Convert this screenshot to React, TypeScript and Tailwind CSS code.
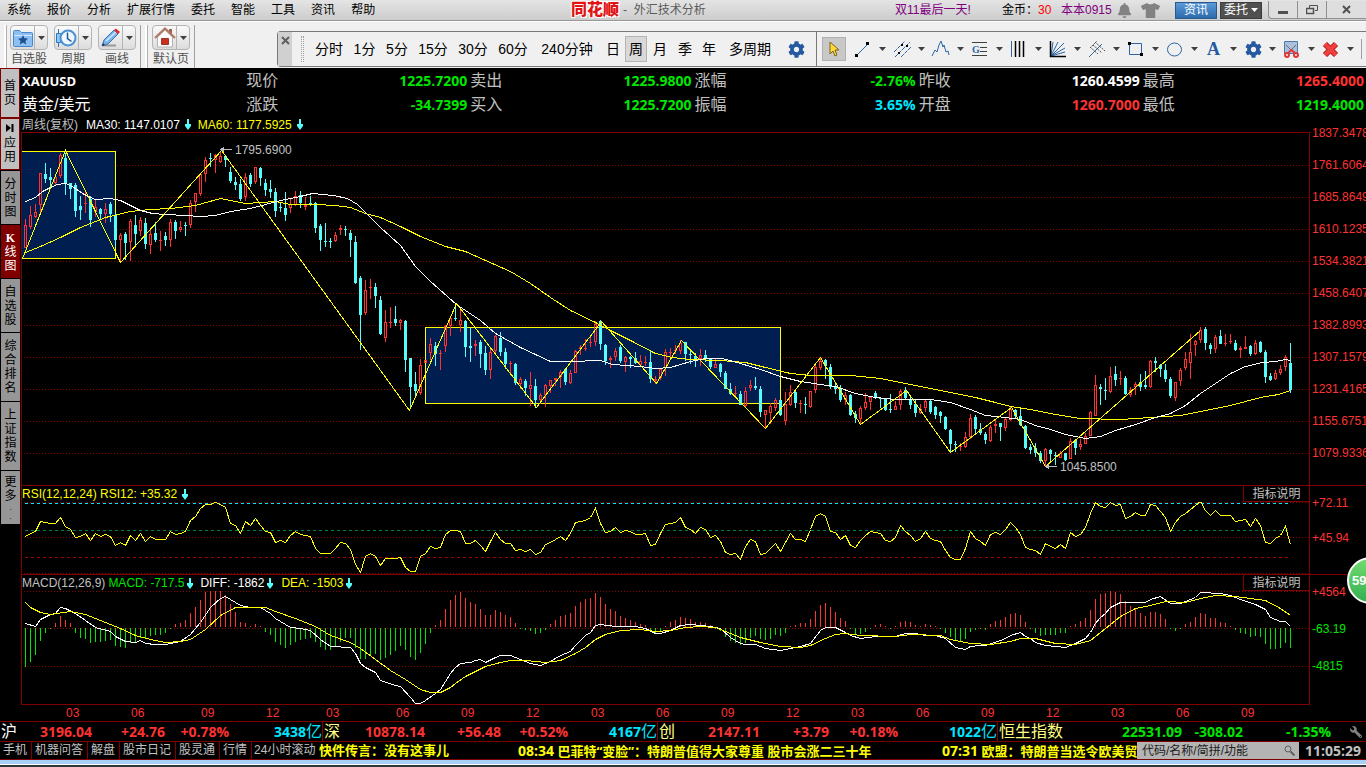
import type {ReactNode} from "react";
import {FaTshirt, FaBell, FaWrench, FaCog} from "react-icons/fa";

// [up, body top, body bottom, high, low], one candle per week
const candles = [
  [1,225,248,219,248],[1,215,227,206,229],[1,212,217,204,218],[1,173,205,173,212],[0,174,179,163,183],
  [0,177,180,168,188],[1,177,183,174,185],[1,155,176,153,178],[0,158,183,153,195],[0,183,189,183,199],
  [0,185,211,183,217],[0,206,210,196,220],[1,203,204,192,213],[0,199,220,196,227],[1,207,212,199,217],
  [0,209,214,208,219],[1,209,214,203,223],[0,204,214,202,222],[0,215,240,213,247],[1,235,240,233,262],
  [0,234,243,232,260],[1,221,242,219,261],[0,225,234,215,247],[1,220,231,217,236],[0,223,244,218,249],
  [1,234,245,229,254],[0,233,240,222,242],[1,240,241,231,251],[0,236,240,232,246],[1,222,240,219,247],
  [0,222,231,220,239],[1,227,230,221,232],[0,225,226,222,236],[1,203,225,200,228],[1,193,202,193,212],
  [1,174,194,173,196],[1,160,174,157,182],[0,158,159,153,167],[1,155,160,154,173],[1,156,162,151,163],
  [0,156,160,155,167],[0,172,181,167,183],[0,182,185,177,190],[0,184,199,179,201],[1,177,197,173,201],
  [0,175,184,173,187],[1,167,182,167,184],[0,168,178,167,186],[0,183,190,179,196],[0,189,192,180,198],
  [0,192,211,188,217],[0,207,208,203,212],[0,208,215,192,221],[1,204,208,198,213],[1,196,205,191,206],
  [0,195,203,191,208],[1,205,207,197,210],[0,203,205,196,206],[0,203,228,202,233],[0,226,240,224,251],
  [0,241,242,223,247],[0,241,242,238,248],[1,235,241,232,242],[1,228,230,225,235],[0,229,230,226,236],
  [0,233,240,230,257],[0,242,283,236,284],[0,278,315,276,350],[1,290,313,280,315],[1,287,288,279,299],
  [0,287,296,283,308],[0,300,334,296,335],[1,322,338,310,342],[1,322,323,307,328],[0,319,323,306,326],
  [1,320,323,319,330],[0,321,360,320,372],[0,358,387,358,409],[0,384,391,372,396],[1,365,393,359,395],
  [1,360,363,360,363],[1,344,353,338,360],[0,346,354,342,366],[1,353,354,350,370],[1,326,346,325,352],
  [1,318,326,316,336],[0,318,319,303,321],[1,320,325,310,332],[0,321,347,320,357],[0,346,348,328,362],
  [1,344,346,340,356],[0,342,354,340,368],[0,353,370,346,375],[1,352,370,349,379],[1,336,351,335,354],
  [0,338,352,332,356],[0,352,364,348,369],[1,363,364,361,374],[0,364,383,363,385],[1,379,384,377,389],
  [0,381,388,379,396],[1,385,389,372,406],[0,386,400,379,408],[1,395,400,393,404],[1,385,395,384,407],
  [1,380,386,380,393],[1,378,380,378,386],[1,372,377,370,388],[0,369,382,368,385],[1,373,383,370,384],
  [1,351,373,350,373],[1,347,349,345,355],[1,348,349,339,351],[1,342,343,335,347],[1,324,342,321,346],
  [0,321,344,320,350],[0,345,361,344,365],[1,358,360,356,368],[1,351,357,348,361],[0,347,361,345,363],
  [1,357,362,356,372],[0,357,359,356,368],[0,358,363,352,364],[1,361,365,355,367],[1,362,363,356,366],
  [0,362,379,350,383],[1,379,381,376,384],[1,369,378,368,380],[1,352,368,349,376],[1,352,353,348,357],
  [1,350,351,345,354],[1,343,351,340,354],[0,342,354,342,361],[0,354,355,351,364],[0,356,361,353,367],
  [1,355,359,349,366],[0,355,358,350,362],[0,358,367,358,369],[1,364,368,359,368],[0,364,372,363,377],
  [0,373,389,371,389],[0,389,394,383,395],[1,393,394,386,397],[0,394,405,391,405],[1,391,406,387,407],
  [1,385,388,380,391],[0,386,388,377,390],[0,389,412,386,417],[1,410,415,410,428],[1,406,413,403,424],
  [1,400,408,398,411],[0,400,415,400,416],[1,404,421,392,425],[1,392,405,385,406],[0,392,403,391,408],
  [1,403,404,400,413],[0,404,405,397,414],[1,391,407,391,408],[1,367,390,365,393],[1,361,368,358,370],
  [0,360,366,359,379],[0,367,387,364,389],[0,387,389,383,394],[0,388,400,385,402],[1,395,400,392,405],
  [0,395,415,394,416],[0,414,418,411,423],[1,408,419,406,424],[1,402,408,393,410],[1,397,402,397,410],
  [0,393,397,391,399],[0,398,399,397,408],[0,398,410,398,411],[0,409,410,394,413],[1,406,410,401,410],
  [1,391,405,389,410],[0,390,398,387,399],[0,399,405,396,409],[0,404,413,399,417],[1,409,413,404,414],
  [1,401,408,400,412],[0,401,412,400,414],[0,407,415,406,419],[0,412,416,411,423],[0,417,429,416,430],
  [0,430,444,429,452],[0,444,445,441,452],[1,446,447,443,451],[1,437,447,432,448],[1,418,437,414,439],
  [0,417,429,415,435],[0,429,433,423,435],[0,434,440,432,444],[1,427,441,425,442],[1,424,426,419,433],
  [0,423,427,423,441],[1,419,428,417,431],[1,409,420,406,421],[0,410,416,409,418],[0,416,425,407,426],
  [0,426,448,425,449],[0,447,450,444,454],[0,448,453,443,457],[0,453,461,451,463],[1,449,461,448,466],
  [0,450,454,449,461],[0,455,456,452,465],[1,453,458,451,458],[0,453,460,453,461],[1,441,459,438,459],
  [0,440,448,439,455],[1,444,447,439,450],[1,436,444,433,444],[1,412,436,411,436],[1,385,416,375,416],
  [0,387,389,384,405],[0,390,391,378,400],[1,376,392,367,393],[0,374,380,366,386],[1,378,379,371,385],
  [0,378,394,376,395],[1,390,395,387,397],[1,384,387,382,395],[0,382,387,374,391],[0,385,387,371,389],
  [1,361,387,360,388],[0,361,363,357,372],[0,365,369,364,377],[0,370,379,364,382],[0,379,396,377,398],
  [1,382,398,382,401],[1,370,381,368,386],[1,359,368,352,370],[1,352,363,334,379],[1,341,345,340,356],
  [1,330,340,327,343],[0,329,343,327,350],[0,345,349,343,354],[1,337,349,335,353],[0,336,344,330,344],
  [1,343,344,334,346],[1,341,342,334,344],[0,343,350,340,351],[1,348,350,346,358],[1,347,349,336,349],
  [0,346,354,345,356],[1,343,354,340,355],[0,342,352,341,353],[0,352,377,350,383],[0,376,380,373,381],
  [1,373,379,370,380],[1,369,373,365,375],[1,357,367,355,371],[0,363,390,343,393],
];

const ma30 = "25,201 35,197 42,191 50,187 57,184 65,183 72,186 82,193 90,197 95,199 110,198 120,200 130,205 140,210 152,213 165,214 185,215 200,216 215,215 230,211 250,208 265,204 280,200 300,196 312,193 333,195 347,198 357,204 367,214 380,227 400,245 415,266 430,281 456,304 480,320 495,333 520,347 550,361 570,361 600,360 612,364 640,366 655,368 670,367 690,361 705,358 722,358 740,363 760,369 780,376 800,381 820,384 835,386 855,393 875,397 895,399 930,399 950,402 970,409 985,415 1005,417 1020,419 1035,425 1050,429 1065,434 1085,438 1100,436 1115,430 1135,424 1155,417 1170,413 1185,405 1200,393 1215,383 1230,373 1245,366 1262,362 1275,361 1285,359 1290,360";
const ma60 = "25,252 40,246 60,237 80,227 105,217 130,211 150,209 170,208 195,205 220,198 245,203 275,201 290,204 315,204 335,205 350,207 365,213 380,217 400,226 420,236 445,246 465,251 485,260 510,271 530,283 550,297 570,310 595,322 610,330 630,340 655,353 672,357 690,359 720,360 745,362 765,367 790,373 810,375 850,375 880,378 900,382 930,388 955,393 975,397 995,402 1010,406 1030,409 1055,414 1080,418 1120,419 1150,417 1180,415 1205,410 1230,405 1260,397 1278,394 1290,390";
const zigzag = "22,258 65,150 120,262 221,150 409,410 456,303 536,407 601,321 656,383 681,340 765,428 820,357 860,424 906,390 950,452 1011,407 1045,466 1200,330";

const rsi = [
  167,160,154,124,127,130,128,110,138,148,170,168,160,179,160,169,162,169,196,186,196,164,180,160,184,169,178,178,178,152,162,158,
  153,120,108,84,73,72,67,72,82,128,136,160,124,136,115,135,153,155,185,180,187,164,154,163,166,168,205,220,220,220,205,187,
  190,206,253,276,228,220,228,256,235,235,235,230,260,274,274,229,220,197,205,200,162,151,151,154,190,190,181,196,213,184,157,178,
  190,190,211,206,214,208,223,215,192,185,178,167,181,160,125,123,121,112,85,130,157,152,142,157,151,153,163,161,160,196,193,160,
  133,130,127,112,142,146,160,142,148,172,166,184,215,223,220,238,197,178,184,223,219,205,190,214,187,160,178,178,184,148,109,100,
  109,154,157,178,166,196,202,181,166,154,157,160,181,184,172,136,152,166,184,173,154,175,180,184,211,232,236,236,205,154,175,184,
  196,163,157,163,148,127,142,162,202,206,211,222,190,198,205,193,205,157,169,163,142,100,67,79,82,67,75,73,115,109,97,106,
  106,72,76,93,112,154,127,109,98,87,76,64,91,106,91,106,105,104,124,121,118,139,115,136,187,190,175,166,139,193,
];

const macd = [
  -117,-102,-81,-39,-15,-3,11,32,22,11,-15,-30,-33,-45,-43,-43,-40,-36,-54,-57,-60,-45,-42,-30,-30,-24,-21,-21,-15,-2,8,13,
  20,41,59,80,104,110,110,110,97,68,44,14,11,2,8,3,-12,-21,-42,-51,-60,-51,-42,-36,-33,-30,-42,-57,-66,-66,-54,-42,
  -30,-30,-60,-93,-93,-85,-78,-96,-90,-81,-69,-54,-66,-87,-96,-75,-48,-15,5,20,53,80,95,104,86,74,68,53,35,35,50,44,
  35,29,11,-2,-6,-10,-18,-15,-6,8,20,32,35,41,62,74,83,86,101,89,68,53,47,32,26,20,14,9,5,-9,-15,-12,
  3,14,20,29,26,23,14,14,11,5,-3,-9,-27,-39,-45,-51,-45,-30,-24,-33,-36,-33,-21,-24,-15,2,5,11,11,23,47,65,
  71,59,44,26,17,-3,-18,-18,-12,-3,5,8,3,-3,2,14,17,14,5,3,8,5,2,-3,-15,-27,-39,-43,-33,-12,-7,-4,
  -6,8,17,20,29,38,41,35,14,-3,-15,-24,-21,-21,-21,-15,-15,2,8,17,26,50,83,98,101,110,104,98,77,62,53,41,
  32,44,44,38,23,-4,-9,-3,8,14,29,41,38,26,26,14,11,4,-6,-15,-18,-27,-24,-27,-48,-63,-63,-60,-45,-60,
];

// [week, level]
const diff = [
  [0,430],[2,437],[3,418],[5,403],[6,400],[7,382],[8,384],[10,398],[12,420],[14,440],[17,452],[18,467],[20,484],[22,487],[23,481],[24,489],
  [26,493],[28,493],[31,483],[33,463],[35,425],[37,380],[39,355],[40,349],[42,365],[43,376],[45,381],[47,380],[49,398],[50,415],[53,442],
  [55,444],[57,450],[59,478],[61,497],[65,500],[66,518],[67,550],[68,562],[70,577],[71,600],[74,616],[75,617],[77,650],[78,670],[79,668],
  [80,660],[82,640],[83,628],[85,580],[86,560],[87,548],[89,545],[90,539],[91,538],[92,545],[94,530],[95,526],[97,526],[99,538],[101,548],
  [103,556],[105,542],[107,526],[109,514],[110,496],[112,464],[113,455],[114,436],[115,433],[118,437],[122,439],[124,445],[126,459],
  [127,460],[129,450],[131,434],[133,433],[135,436],[137,438],[139,445],[141,472],[143,490],[144,493],[146,491],[148,505],[151,511],
  [155,497],[157,488],[159,450],[160,442],[162,442],[164,455],[165,466],[167,475],[170,469],[174,469],[176,460],[178,460],[180,464],
  [182,466],[184,475],[186,500],[188,506],[189,497],[191,494],[192,495],[195,480],[196,475],[197,464],[199,457],[200,468],[201,474],
  [202,485],[204,494],[206,498],[208,501],[209,495],[210,490],[212,475],[213,456],[214,430],[215,410],[216,400],[217,380],[219,365],
  [224,366],[225,356],[227,349],[229,368],[231,370],[234,352],[235,337],[239,340],[241,346],[243,358],[246,372],[248,388],[249,410],
  [251,424],[252,424],[253,438],
];
const dea = [
  [0,366],[1,380],[3,397],[5,401],[9,394],[12,402],[15,420],[19,445],[22,466],[25,478],[28,485],[31,484],[33,477],[36,448],[39,405],
  [42,382],[48,382],[50,392],[54,415],[58,437],[61,466],[65,487],[67,505],[70,538],[73,570],[76,598],[79,628],[81,637],[83,637],[85,620],
  [86,610],[88,587],[90,572],[92,558],[95,546],[97,539],[100,541],[104,547],[107,540],[110,520],[112,500],[114,478],[116,463],[119,450],
  [123,446],[126,452],[129,449],[132,440],[135,438],[138,442],[140,454],[143,470],[147,485],[151,497],[155,500],[157,496],[160,475],
  [162,461],[164,460],[167,466],[174,468],[177,463],[183,465],[185,476],[189,490],[193,493],[197,482],[199,473],[202,474],[206,488],
  [210,493],[213,480],[216,445],[219,408],[222,385],[225,374],[228,364],[232,366],[235,355],[238,346],[242,347],[248,361],[251,385],[253,406],
];

const weekX = (i: number) => 25 + i * 5;
const levelY = (v: number) => 480 + Math.round(v / 3);
const toPoints = (data: number[][]) => data.map(([i, v]) => `${weekX(i)},${levelY(v)}`).join(" ");

const menus = ["系统", "报价", "分析", "扩展行情", "委托", "智能", "工具", "资讯", "帮助"];

const periods = [
  {label: "分时", width: "w-[38px]"},
  {label: "1分", width: "w-[33px]"},
  {label: "5分", width: "w-8"},
  {label: "15分", width: "w-10"},
  {label: "30分", width: "w-10"},
  {label: "60分", width: "w-10"},
  {label: "240分钟", width: "w-[68px]"},
  {label: "日", width: "w-6"},
  {label: "周", width: "w-[22px]", active: true},
  {label: "月", width: "w-[26px]"},
  {label: "季", width: "w-6"},
  {label: "年", width: "w-6"},
  {label: "多周期", width: "w-[58px]"},
];

const sideTabs = [
  {label: "分时图", height: "h-[53px]"},
  {label: "K线图", height: "h-[53px]", active: true},
  {label: "自选股", height: "h-[53px]"},
  {label: "综合排名", height: "h-[68px]"},
  {label: "上证指数", height: "h-[68px]"},
  {label: "更多..", height: "h-[53px]"},
];

const quotes = [
  [{label: "现价", value: "1225.7200", color: "text-[#00e600]"}, {label: "涨跌", value: "-34.7399", color: "text-[#00e600]"}],
  [{label: "卖出", value: "1225.9800", color: "text-[#00e600]"}, {label: "买入", value: "1225.7200", color: "text-[#00e600]"}],
  [{label: "涨幅", value: "-2.76%", color: "text-[#00e600]"}, {label: "振幅", value: "3.65%", color: "text-[#00e6ff]"}],
  [{label: "昨收", value: "1260.4599", color: "text-white"}, {label: "开盘", value: "1260.7000", color: "text-[#ff3232]"}],
  [{label: "最高", value: "1265.4000", color: "text-[#ff3232]"}, {label: "最低", value: "1219.4000", color: "text-[#00e600]"}],
];

const prices = ["1837.3478", "1761.6064", "1685.8649", "1610.1235", "1534.3821", "1458.6407", "1382.8993", "1307.1579", "1231.4165", "1155.6751", "1079.9336"];

const months = [
  {label: "03", width: "w-[65px]"},
  {label: "06", width: "w-[70px]"},
  {label: "09", width: "w-[65px]"},
  {label: "12", width: "w-[60px]"},
  {label: "03", width: "w-[70px]"},
  ...["06", "09", "12", "03", "06", "09", "12", "03", "06", "09", "12", "03", "06", "09"].map((label) => ({label, width: "w-[65px]"})),
];

const Caret = ({className = "text-[#404040]"}: { className?: string }) => (
  <svg width="7" height="4" viewBox="0 0 7 4" className={`shrink-0 ${className}`}>
    <path d="M0 0h7L3.5 4z" fill="currentColor" />
  </svg>
);

const DownArrow = () => (
  <svg width="6" height="11" viewBox="0 0 6 11" className="shrink-0 text-[#54fcfc]">
    <path d="M2 0h2v5h2v2L3 11 0 7V5h2z" fill="currentColor" />
  </svg>
);

const Dotted = ({y}: { y: number }) => (
  <line x1="24" x2="1309" y1={y + 0.5} y2={y + 0.5} stroke="#8c0000" strokeDasharray="1 2" />
);

const Dashed = ({y, color}: { y: number, color: string }) => (
  <line x1="25" x2="1288" y1={y + 0.5} y2={y + 0.5} stroke={color} strokeDasharray="3 3" />
);

const Curve = ({points, color}: { points: string, color: string }) => (
  <polyline points={points} fill="none" stroke={color} transform="translate(.5 .5)" />
);

const LargeTool = ({label, children}: { label: string, children: ReactNode }) => (
  <div className="flex flex-col items-center">
    <button aria-label={label} className="flex h-[26px] w-[38px] rounded-sm border border-[#b4b4b4] bg-gradient-to-b from-[#fafafa] to-[#dcdcdc]">
      <span className="flex h-full flex-1 items-center justify-center border-r border-[#b4b4b4]">{children}</span>
      <span className="flex h-full w-3 items-center justify-center"><Caret /></span>
    </button>
    <span className="text-[12px] leading-[18px] text-[#505050]">{label}</span>
  </div>
);

const DrawTool = ({label, children}: { label: string, children: ReactNode }) => (
  <button aria-label={label} className="flex h-6 w-[39px] items-center gap-[6px]">
    <svg width="20" height="20" viewBox="0 0 20 20" fill="none" className="shrink-0">{children}</svg>
    <Caret />
  </button>
);

const Cog = () => <FaCog className="text-[#2458a0]" size={17} />;

const MenuBar = () => (
  <header className="flex h-[21px] items-center border-b border-[#969696] bg-gradient-to-b from-[#e4e4e4] to-[#cdcdcd] text-[12px] whitespace-nowrap">
    <nav className="flex w-[571px] gap-4 pl-[7px]">
      {menus.map((m) => <button key={m}>{m}</button>)}
    </nav>
    <h1 className="flex items-center">
      <span className="w-[52px] text-[16px] leading-4 font-black text-[#e01414] [font-style:oblique_8deg] [text-shadow:1px_1px_0_#fff,-1px_-1px_0_#fff,1px_-1px_0_#fff,-1px_1px_0_#fff]">同花顺</span>
      <span className="text-[#5a5a5a]">-&nbsp; 外汇技术分析</span>
    </h1>
    <div className="ml-auto flex items-center">
      <a href="#promo" className="w-[107px] text-[#800080]">双11最后一天!</a>
      <span className="w-9">金币：</span>
      <span className="w-[23px] text-[#ff0000]">30</span>
      <a href="#user" className="w-14 text-[#800080]">本本0915</a>
      <button aria-label="消息" className="w-6"><FaBell size={15} className="text-[#828282]" /></button>
      <button aria-label="换肤" className="w-[34px]"><FaTshirt size={19} className="text-[#828282]" /></button>
      <button className="mr-[3px] h-[17px] w-[42px] border border-[#2a5a8c] bg-gradient-to-b from-[#5a9ad8] to-[#2c6cac] leading-[15px] text-white">资讯</button>
      <button className="mr-[6px] flex h-[17px] w-[42px] items-center justify-center gap-[3px] border border-[#3c3c3c] bg-[#505050] leading-[15px] text-white">
        委托<Caret className="text-white" />
      </button>
      <div className="flex h-[18px] rounded-bl border-b border-l border-[#909090] bg-[#dedede] text-[#505050]">
        <button aria-label="最小化" className="flex w-[29px] items-center justify-center border-r border-[#909090]">
          <svg width="10" height="10"><path d="M0 6h10v3H0z" fill="currentColor" /></svg>
        </button>
        <button aria-label="还原" className="flex w-[29px] items-center justify-center border-r border-[#909090]">
          <svg width="12" height="10" fill="none" stroke="currentColor"><path d="M3.5 3V.5h8v5H9" /><path d="M.5 3.5h7v5h-7z" strokeWidth="1.5" /></svg>
        </button>
        <button aria-label="关闭" className="flex w-[39px] items-center justify-center">
          <svg width="9" height="9" fill="none" stroke="currentColor" strokeWidth="2"><path d="M1 1l7 7M8 1L1 8" /></svg>
        </button>
      </div>
    </div>
  </header>
);

const ToolBar = () => (
  <div className="flex h-[47px] border-t border-white bg-[#f0f0f0]">
    <div className="flex w-[277px] shrink-0 pt-[3px]">
      <div className="ml-1 w-[3px] border-r border-[#b0b0b0] bg-white" />
      <div className="flex gap-[6px] border-r border-[#a0a0a0] pr-1 pl-[3px]">
        <LargeTool label="自选股">
          <svg width="20" height="18" viewBox="0 0 20 18">
            <path d="M.5 2.5q0-1 1-1h5l2 2h10q1 0 1 1v12q0 1-1 1h-17q-1 0-1-1z" fill="#8cc0f4" stroke="#4a86c8" />
            <path d="M1 6.5h18" stroke="#d4e8fc" />
            <path d="M10 6l1.5 3.2 3.5.4-2.6 2.3.8 3.5-3.2-1.8-3.2 1.8.8-3.5L5 9.6l3.5-.4z" fill="#1c508c" />
          </svg>
        </LargeTool>
        <LargeTool label="周期">
          <svg width="21" height="20" viewBox="0 0 21 20" fill="none">
            <path d="M2.5 1v18" stroke="#2c78c0" />
            <path d="M.5 5.5h4v9h-4z" fill="#8cc8f8" stroke="#2c78c0" />
            <circle cx="12" cy="10" r="7.5" fill="#f0f8ff" stroke="#4a90d0" strokeWidth="2" />
            <path d="M11.5 4.5v6l4 3" stroke="#20589c" strokeWidth="1.5" />
          </svg>
        </LargeTool>
        <LargeTool label="画线">
          <svg width="20" height="20" viewBox="0 0 20 20">
            <path d="M2 17.5h13" stroke="#9a9a9a" strokeWidth="2" />
            <path d="M1 18l2-6L13 2l4 4L7 16z" fill="#78b4ec" stroke="#3c74b4" />
            <path d="M5 13L15 4" stroke="#d4ecff" strokeWidth="1.5" />
            <path d="M13 2l2-1.5 4 3.5-2 2z" fill="#e02828" />
            <path d="M1 18l1-3 2 2z" fill="#303030" />
          </svg>
        </LargeTool>
      </div>
      <div className="ml-1 w-[3px] border-r border-[#b0b0b0] bg-white" />
      <div className="flex border-r border-[#a0a0a0] pr-1 pl-1">
        <LargeTool label="默认页">
          <svg width="22" height="21" viewBox="0 0 22 21">
            <path d="M15 2h3v5h-3z" fill="#a06450" />
            <path d="M3.5 10L11 3l7.5 7v10h-15z" fill="#fafafa" stroke="#b4b4b4" />
            <path d="M1 11L11 1.5 21 11" fill="none" stroke="#b07860" strokeWidth="2" />
            <path d="M7.5 11.5h7v6h-7z" fill="#d42c1c" stroke="#8c3c2c" />
          </svg>
        </LargeTool>
      </div>
    </div>
    <div className="mt-[9px] flex h-[36px] flex-1 rounded-l-sm border border-r-0 border-[#787878]">
      <button aria-label="收起" className="flex w-[14px] shrink-0 justify-center bg-[#d0d0d0] pt-1">
        <svg width="9" height="9" fill="none" stroke="#606060" strokeWidth="2"><path d="M1 1l7 7M8 1L1 8" /></svg>
      </button>
      <div className="my-1 mr-[6px] ml-[9px] w-[3px] border-x border-dotted border-[#a0a0a0]" />
      <div className="flex shrink-0 items-center text-[14px] whitespace-nowrap">
        {periods.map((p) => (
          <button key={p.label} className={`${p.width} h-[26px] ${p.active ? "border border-[#b4b4b4] bg-[#d8d8d8]" : ""}`}>{p.label}</button>
        ))}
        <button aria-label="设置" className="mr-[3px] flex w-[34px] justify-center"><Cog /></button>
      </div>
      <div className="flex flex-1 items-center border-l border-[#787878] pl-[5px]">
        <button aria-label="选择" className="flex h-6 w-6 items-center justify-center border border-[#b0b0b0] bg-[#c8c8c8]">
          <svg width="12" height="17" viewBox="0 0 12 17">
            <path d="M2 1v12l3-3 2 5 2-1-2-5h4z" fill="#ffd83c" stroke="#786414" />
          </svg>
        </button>
        <div className="ml-[7px] flex">
          <DrawTool label="直线">
            <path d="M3 17L16 4" stroke="#2c64a4" />
            <path d="M2 15h3v3H2zM13 3h3v3h-3z" fill="#000" />
          </DrawTool>
          <DrawTool label="平行线">
            <path d="M2 13L13 2M3 18L18 3M9 18L19 8" stroke="#2c64a4" strokeDasharray="4 1" />
            <path d="M6 13h2v2H6zM9 5h2v2H9zM14 6h2v2h-2z" fill="#000" />
          </DrawTool>
          <DrawTool label="波浪线">
            <path d="M1 17l3-6 2 2 2-7 2-4 2 6 1-2 2 7 2-1 1 4" stroke="#2c64a4" />
          </DrawTool>
          <DrawTool label="黄金分割">
            <path d="M2 3.5h15M10 8.5h7M10 12.5h7M2 16.5h15" stroke="#404040" />
            <text x="2" y="14" fontSize="10" fontWeight="bold" fill="#2c64a4" fontFamily="Liberation Serif">G</text>
          </DrawTool>
          <DrawTool label="周期线">
            <path d="M2.5 2v16" stroke="#2c64a4" /><path d="M6.5 2v16M10.5 2v16M14.5 2v16" stroke="#000" strokeWidth="1.5" />
          </DrawTool>
          <DrawTool label="扇形线">
            <path d="M3 17L5 3M3 17L10 3M3 17L16 4M3 17l14-8M3 17l14-4" stroke="#2c64a4" />
            <path d="M2.500 2v15.500H18" stroke="#000" strokeWidth="1.500" />
          </DrawTool>
          <DrawTool label="通道线">
            <path d="M2 18L15 5" stroke="#2c64a4" />
            <path d="M8 3l10 9M6 6l9 8M3 8l8 7M3 9l7-7" stroke="#505050" strokeDasharray="2 1" />
          </DrawTool>
          <DrawTool label="矩形">
            <path d="M3.5 4.5h12v11h-12z" stroke="#2c64a4" />
            <path d="M2 3h3v3H2zM14 14h3v3h-3z" fill="#000" />
          </DrawTool>
          <DrawTool label="椭圆">
            <ellipse cx="9.5" cy="10.5" rx="7" ry="6.500" stroke="#2c64a4" />
          </DrawTool>
          <DrawTool label="文字">
            <text x="3" y="16" fontSize="18" fontWeight="bold" fill="#2458a0" fontFamily="Liberation Serif">A</text>
          </DrawTool>
          <button aria-label="画线设置" className="flex h-6 w-[39px] items-center gap-[7px] pl-[2px]"><Cog /><Caret /></button>
          <DrawTool label="截图">
            <path d="M2.5 2.5h13v12h-13z" fill="#a8c0dc" stroke="#5078a8" />
            <path d="M4 6l8 8M14 6l-8 8" stroke="#707070" />
            <circle cx="5" cy="16" r="2" stroke="#e03838" strokeWidth="2" /><circle cx="14" cy="16" r="2" stroke="#e03838" strokeWidth="2" />
            <path d="M6 14l3.5-3 3.5 3" stroke="#e03838" strokeWidth="2" />
          </DrawTool>
          <DrawTool label="删除">
            <path d="M4 5l11 11M15 5L4 16" stroke="#b01818" strokeWidth="6" />
            <path d="M4 5l11 11M15 5L4 16" stroke="#f04040" strokeWidth="4" />
          </DrawTool>
        </div>
        <div className="ml-auto mr-1 h-5 w-px bg-[#a0a0a0]" />
      </div>
    </div>
  </div>
);

const SideBar = () => (
  <nav className="flex w-[21px] shrink-0 flex-col pr-px text-[12px] leading-[14px]">
    <button className="flex h-[50px] flex-col items-center justify-center border border-[#800000] bg-[#c0c0c0]">
      <span>首</span><span>页</span>
    </button>
    <button className="mb-px flex h-[52px] flex-col items-center justify-center border border-[#800000] bg-[#c0c0c0]">
      <svg width="8" height="8" className="mb-1"><path d="M0 0l5 4-5 4zM5.5 0h2v8h-2z" /></svg>
      <span>应</span><span>用</span>
    </button>
    {sideTabs.map((t) => (
      <button key={t.label} className={`${t.height} mb-px ml-px flex flex-col items-center justify-center ${t.active ? "bg-[#800000] text-white" : "bg-[#969696]"}`}>
        {t.label.split("").map((c, i) => <span key={i} className={c === "K" ? "font-['Liberation_Serif',serif] font-bold" : c === "." ? "text-[8px] leading-[9px]" : ""}>{c}</span>)}
      </button>
    ))}
  </nav>
);

const QuoteHeader = () => (
  <section className="grid grid-cols-6 pt-px text-[16px] leading-6 text-[#c0c0c0]">
    <div className="pl-px text-white">
      <h2 className="h-6 font-['Open_Sans','Noto_Sans',sans-serif] text-[13px] font-bold">XAUUSD</h2>
      <p className="h-6">黄金/美元</p>
    </div>
    {quotes.map((col) => (
      <dl key={col[0].label} className="pr-[2px] pl-px">
        {col.map((q) => (
          <div key={q.label} className="flex h-6 justify-between">
            <dt>{q.label}</dt>
            <dd className={`${q.color} font-['Open_Sans','Noto_Sans',sans-serif] text-[14px] font-bold`}>{q.value}</dd>
          </div>
        ))}
      </dl>
    ))}
  </section>
);

const HelpButton = () => (
  <button className="absolute top-0 right-0 h-4 w-[66px] border-b border-l border-[#800000] bg-black text-[12px] leading-4 text-[#c0c0c0]">指标说明</button>
);

const PricePanel = () => (
  <section className="flex">
    <div className="flex-1">
      <div className="flex h-[15px] items-center gap-[5px] pl-px text-[12px] whitespace-nowrap">
        <span className="mr-[3px] text-[#c0c0c0]">周线(复权)</span>
        <span className="text-white">MA30: 1147.0107</span><DownArrow />
        <span className="ml-[2px] text-[#ffff00]">MA60: 1177.5925</span><DownArrow />
      </div>
      <div className="border-t border-r border-l border-[#800000]">
        <svg viewBox="22 133 1287 352" preserveAspectRatio="none" shapeRendering="crispEdges" className="block h-[352px] w-full">
          {[165, 197, 229, 261, 293, 325, 357, 389, 421, 453].map((y) => <Dotted key={y} y={y} />)}
          <rect x="20.5" y="151.5" width="95" height="107" fill="#001f50" stroke="#ffff00" />
          <rect x="425.5" y="327.5" width="355" height="76" fill="#001f50" stroke="#ffff00" />
          {candles.map(([up, top, bottom, high, low], i) => {
            const x = weekX(i);
            const height = Math.max(bottom - top, 1);
            if (!up) {
              return (
                <g key={i} fill="#54fcfc">
                  <rect x={x} y={high} width="1" height={low - high} />
                  <rect x={x - 1} y={top} width="3" height={height} />
                </g>
              );
            }
            return (
              <g key={i} fill="#ff3232">
                <rect x={x} y={high} width="1" height={top - high} />
                <rect x={x} y={bottom} width="1" height={low - bottom} />
                {height > 2
                  ? <rect x={x - 0.5} y={top + 0.5} width="2" height={height - 1} fill="none" stroke="#ff3232" />
                  : <rect x={x - 1} y={top} width="3" height={height} />}
              </g>
            );
          })}
          <Curve points={ma60} color="#ffff00" />
          <Curve points={ma30} color="#ffffff" />
          <Curve points={zigzag} color="#ffff00" />
          <g fill="#c0c0c0" fontSize="12" fontFamily="Liberation Sans">
            <path d="M220 149.5l4-3v2.5h8v1h-8v2.5z" />
            <text x="235" y="154">1795.6900</text>
            <path d="M1045 466.5l4-3v2.5h8v1h-8v2.5z" />
            <text x="1060" y="471">1045.8500</text>
          </g>
        </svg>
      </div>
    </div>
    <div className="w-14 overflow-hidden pl-[2px] text-[12px] leading-8 text-[#ff3232]">
      {prices.map((p) => <div key={p}>{p}</div>)}
    </div>
  </section>
);

const RsiPanel = () => (
  <section className="flex border-t border-[#800000]">
    <div className="relative flex-1 border-r border-l border-[#800000]">
      <div className="flex h-4 items-center gap-[5px] text-[12px] text-[#ffff00]">RSI(12,12,24) RSI12: +35.32<DownArrow /></div>
      <svg viewBox="22 502 1287 72" preserveAspectRatio="none" shapeRendering="crispEdges" className="block h-[72px] w-full">
        <Dotted y={502} /><Dotted y={537} /><Dotted y={573} />
        <Dashed y={503} color="#00e6ff" />
        <Dashed y={530} color="#008040" />
        <Dashed y={557} color="#a00000" />
        <Curve points={toPoints(rsi.map((v, i) => [i, v]))} color="#ffff00" />
      </svg>
      <HelpButton />
    </div>
    <div className="flex w-14 flex-col gap-[19px] pt-[9px] pl-[2px] text-[12px] leading-4 text-[#ff3232]">
      <span>+72.11</span>
      <span>+45.94</span>
    </div>
  </section>
);

const MacdPanel = () => (
  <section className="flex border-t border-[#800000]">
    <div className="relative flex-1 border-r border-b border-l border-[#800000]">
      <div className="flex h-4 items-center gap-[3px] text-[12px] whitespace-nowrap">
        <span className="text-[#c0c0c0]">MACD(12,26,9)</span>
        <span className="text-[#00e600]">MACD: -717.5</span><DownArrow />
        <span className="ml-1 text-white">DIFF: -1862</span><DownArrow />
        <span className="ml-[5px] text-[#ffff00]">DEA: -1503</span><DownArrow />
      </div>
      <svg viewBox="22 591 1287 113" preserveAspectRatio="none" shapeRendering="crispEdges" className="block h-[113px] w-full">
        <Dotted y={591} /><Dotted y={628} /><Dotted y={666} />
        {macd.map((v, i) => {
          const size = Math.max(Math.round(Math.abs(v) / 3), 1);
          return v > 0
            ? <rect key={i} x={weekX(i)} y={627 - size} width="1" height={size} fill="#ff3232" />
            : <rect key={i} x={weekX(i)} y="628" width="1" height={size} fill="#00e600" />;
        })}
        <Curve points={toPoints(diff)} color="#ffffff" />
        <Curve points={toPoints(dea)} color="#ffff00" />
      </svg>
      <HelpButton />
    </div>
    <div className="flex w-14 flex-col gap-[21px] pt-[9px] pl-[2px] text-[12px] leading-4 text-[#00e600]">
      <span className="text-[#ff3232]">+4564</span>
      <span>-63.19</span>
      <span>-4815</span>
    </div>
  </section>
);

const IndexBar = () => (
  <section className="flex h-5 border-t border-[#800000] font-['Open_Sans','Noto_Sans_CJK_SC',sans-serif] text-[14px] leading-[19px] font-bold whitespace-nowrap text-[#ff3232]">
    <div className="flex w-[323px] border-r border-[#800000] text-right">
      <span className="w-[17px] text-[16px] font-normal text-white">沪</span>
      <span className="w-[75px]">3196.04</span>
      <span className="w-[73px]">+24.76</span>
      <span className="w-16">+0.78%</span>
      <span className="flex-1 text-[#00e6ff]">3438<span className="text-[16px] font-normal">亿</span></span>
    </div>
    <div className="flex w-[335px] border-r border-[#800000] text-right">
      <span className="w-[17px] text-[16px] font-normal text-[#ffff80]">深</span>
      <span className="w-[85px]">10878.14</span>
      <span className="w-[76px]">+56.48</span>
      <span className="w-[67px]">+0.52%</span>
      <span className="flex-1 text-[#00e6ff]">4167<span className="text-[16px] font-normal">亿</span></span>
    </div>
    <div className="flex w-[340px] border-r border-[#800000] text-right">
      <span className="w-[17px] text-[16px] font-normal text-[#ffff80]">创</span>
      <span className="w-[85px]">2147.11</span>
      <span className="w-[69px]">+3.79</span>
      <span className="w-[69px]">+0.18%</span>
      <span className="flex-1 text-[#00e6ff]">1022<span className="text-[16px] font-normal">亿</span></span>
    </div>
    <div className="flex flex-1 pl-px text-right text-[#00e600]">
      <span className="text-[16px] font-normal text-[#ffff80]">恒生指数</span>
      <span className="w-[119px]">22531.09</span>
      <span className="w-[61px]">-308.02</span>
      <span className="w-[88px]">-1.35%</span>
      <button aria-label="设置" className="ml-auto pr-1"><FaWrench size={12} className="-scale-x-100 text-[#808080]" /></button>
    </div>
  </section>
);

const links = ["手机", "机器问答", "解盘", "股市日记", "股灵通", "行情"];

const StatusBar = () => (
  <footer className="flex h-[19px] border-y border-[#800000] text-[12px] leading-[17px] whitespace-nowrap text-[#c0c0c0]">
    {links.map((l) => <a key={l} href="#news" className="border-r border-[#800000] pr-1 pl-[3px]">{l}</a>)}
    <a href="#live" className="w-[67px] pl-[2px]">24小时滚动</a>
    <div className="flex flex-1 overflow-hidden font-['Open_Sans','Noto_Sans_CJK_SC',sans-serif] text-[13px] font-bold text-[#ffff00]">
      <span className="w-[199px] shrink-0">快件传言：没有这事儿</span>
      <span className="w-[424px] shrink-0"><span className="text-[14px]">08:34</span> 巴菲特“变脸”：特朗普值得大家尊重 股市会涨二三十年</span>
      <span className="shrink-0"><span className="text-[14px]">07:31</span> 欧盟：特朗普当选令欧美贸</span>
    </div>
    <label className="flex w-[162px] items-center bg-[#b4b4b4] pr-1 pl-[5px]">
      <input aria-label="搜索" placeholder="代码/名称/简拼/功能" className="w-full min-w-0 flex-1 leading-4 text-black outline-none placeholder:text-[#202020]" />
      <svg width="11" height="11" viewBox="0 0 11 11" fill="none" stroke="#606060"><circle cx="4" cy="4" r="3" /><path d="M6.5 6.5l4 4" strokeWidth="2" /></svg>
    </label>
    <time className="w-[67px] pl-[6px] font-['Open_Sans','Noto_Sans',sans-serif] text-[14px] font-bold">11:05:29</time>
  </footer>
);

export default function App() {
  return (
    <div className="relative min-h-screen overflow-hidden bg-black font-['Liberation_Sans','Noto_Sans_CJK_SC',sans-serif]">
      <MenuBar />
      <ToolBar />
      <main className="flex">
        <SideBar />
        <div className="min-w-0 flex-1">
          <QuoteHeader />
          <PricePanel />
          <RsiPanel />
          <MacdPanel />
          <div className="flex h-4 pl-[45px] text-[12px] leading-4 text-[#ff3232]">
            {months.map((m, i) => <span key={i} className={m.width}>{m.label}</span>)}
          </div>
        </div>
      </main>
      <IndexBar />
      <StatusBar />
      <div className="h-[5px] border-b border-white bg-[#a8d0f8]" />
      <div className="h-[2px] bg-[#303838]" />
      <button className="absolute top-[557px] -right-7 flex h-[47px] w-[47px] items-center rounded-full border-2 border-white bg-gradient-to-b from-[#70dc70] to-[#30b050] pl-[3px] text-[13px] font-bold text-white">59</button>
    </div>
  );
}
